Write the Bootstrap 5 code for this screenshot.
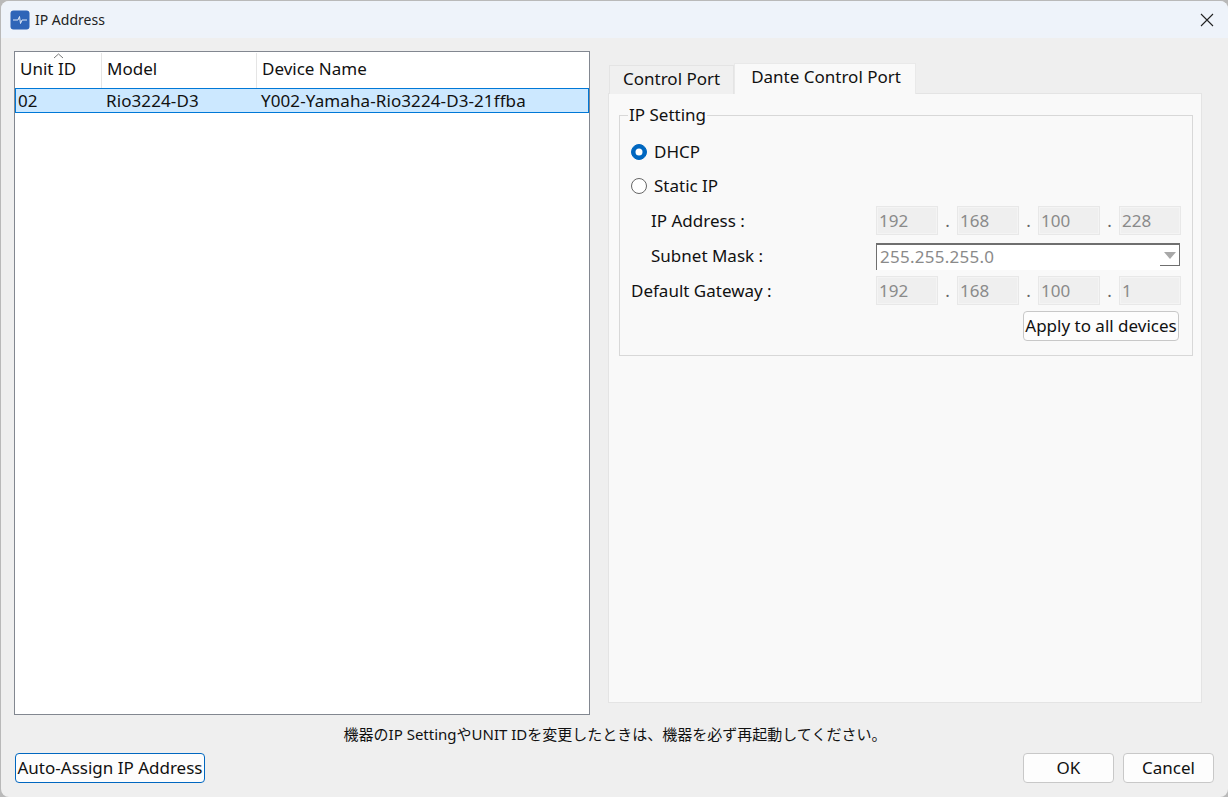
<!DOCTYPE html>
<html lang="ja">
  <head>
    <meta charset="UTF-8" />
    <meta name="viewport" content="width=device-width, initial-scale=1.0" />
    <title>IP Address</title>
    <link href="https://cdn.jsdelivr.net/npm/bootstrap@5.3.0/dist/css/bootstrap.min.css" rel="stylesheet" />
    <style>
      html, body { height: 100%; }
      body {
        background: #b9b9b9;
        font-family: "Noto Sans", "Noto Sans CJK JP", sans-serif;
        font-size: 17px;
        line-height: 22px;
        color: #111;
        overflow: hidden;
      }
      .dlg-window {
        width: 1227px;
        height: 796px;
        margin: 1px 0 0 1px;
        background: #efefef;
        border-radius: 8px;
        overflow: hidden;
      }
      .dlg-title {
        height: 37px;
        background: #eef3fa;
        padding: 0 10px 0 9px;
        font-size: 14px;
        color: #222;
      }
      .title-icon { margin-right: 5px; }
      .dlg-body { padding: 13px 13px 0; height: 677px; }
      .dev-list {
        width: 576px;
        height: 664px;
        background: #fff;
        border: 1px solid #828790;
      }
      .dev-head { height: 35px; margin-top: 1px; position: relative; }
      .dev-head > div { border-right: 1px solid #e5e5e5; padding-left: 5px; line-height: 32px; }
      .sort-mark { position: absolute; left: 38px; top: 0; }
      .col-unit { width: 87px; }
      .col-model { width: 155px; }
      .dev-row {
        height: 25px;
        margin-left: 0;
        background: #cce8ff;
        border: 1px solid #0078d7;
        line-height: 23px;
        letter-spacing: 0.1px;
      }
      .dev-row .col-unit { width: 88px; padding-left: 2px; }
      .dev-row .col-model { width: 155px; padding-left: 2px; }
      .dev-row .col-name { padding-left: 2px; }
      .right-pane { width: 594px; margin-left: 18px; }
      .port-tabs { border-bottom: 0; height: 30px; padding-left: 1px; margin-top: 12px; align-items: flex-end; }
      .port-tabs .nav-link {
        color: #111;
        border-radius: 0;
        margin: 0;
        background: #f0f0f0;
        border: 1px solid #e4e4e4;
        border-bottom: 0;
        height: 29px;
        padding: 2px 13px 0;
        line-height: 22px;
      }
      .port-tabs .nav-link.active {
        background: #f9f9f9;
        height: 31px;
        padding: 2px 14px 0 16px;
        border-color: #e9e9e9;
        color: #111;
      }
      .port-panel {
        height: 610px;
        background: #f9f9f9;
        border: 1px solid #e4e4e4;
        padding: 21px 8px 0 10px;
      }
      .ip-group {
        height: 252px;
        border: 1px solid #d8d8d8;
        padding: 9px 11px 0 11px;
        margin-top: -11px;
      }
      .ip-group legend {
        float: none;
        width: auto;
        margin: 0 0 0 -3px;
        padding: 0 1px;
        font-size: 17px;
        line-height: 22px;
      }
      .radio-line { height: 34px; padding: 0; margin: 0; min-height: 0; }
      .radio-line .form-check-input {
        float: none;
        margin: 0 7px 0 0;
        width: 16px;
        height: 16px;
        border: 1px solid #666;
        background-color: #fff;
      }
      .radio-line .form-check-input:checked {
        border-color: #0067c0;
        background-color: #0067c0;
        opacity: 1;
      }
      .ip-line { height: 35px; }
      .ip-label { width: 245px; }
      .ip-label.indent { padding-left: 20px; }
      .octet.form-control {
        width: 62px;
        height: 29px;
        padding: 0 0 0 1px;
        border: 2px solid #f4f4f4;
        outline: 1px solid #e8e8e8;
        outline-offset: -1px;
        border-radius: 0;
        background: #efefef;
        font-size: 17px;
        color: #8a8a8a;
        line-height: 25px;
      }
      .octet-dot { width: 19px; text-align: center; color: #666; }
      .mask-box {
        width: 304px;
        height: 27px;
        background: #fff;
        border-top: 2px solid #6f6f6f;
        border-left: 1px solid #6f6f6f;
        color: #8a8a8a;
        padding-left: 3px;
        line-height: 24px;
        margin-top: 2px;
        position: relative;
        letter-spacing: 0.25px;
      }
      .mask-arrow {
        position: absolute;
        right: 0;
        top: 0;
        width: 20px;
        height: 21px;
        border-right: 1px solid #6f6f6f;
        border-bottom: 1px solid #6f6f6f;
      }
      .pc-btn.btn {
        background: #fdfdfd;
        border: 1px solid #c8c8c8;
        border-radius: 4px;
        font-size: 17px;
        line-height: 22px;
        padding: 0;
        height: 30px;
        color: #111;
      }
      .pc-btn.btn-apply { width: 156px; }
      .pc-btn.btn-auto { width: 190px; border-color: #0067c0; }
      .pc-btn.btn-foot { width: 91px; }
      .btn-gap { margin-left: 9px; }
      .apply-line { padding-right: 1px; margin-top: 3px; width: 549px; }
      .dlg-note { height: 38px; text-align: center; font-size: 15px; line-height: 38px; padding-left: 1px; }
      .dlg-foot { padding: 0 14px 0 14px; }
    </style>
  </head>
  <body>
    <div class="dlg-window">
      <!-- title bar -->
      <div class="dlg-title d-flex align-items-center">
        <svg width="20" height="20" viewBox="0 0 20 20" class="title-icon">
          <rect x="0.5" y="0.5" width="19" height="19" rx="3" fill="#2f65b8" />
          <path d="M3 10h5l1.5-3.500 1 7 1.500-3.500h5" fill="none" stroke="#dfe8f6" stroke-width="1" />
        </svg>
        <span>IP Address</span>
        <svg width="14" height="14" viewBox="0 0 14 14" class="ms-auto me-1">
          <path d="M1 1l12 12M13 1L1 13" stroke="#222" stroke-width="1.1" fill="none" />
        </svg>
      </div>

      <div class="dlg-body d-flex">
        <!-- device list -->
        <div class="dev-list">
          <div class="dev-head d-flex">
            <svg class="sort-mark" width="11" height="6" viewBox="0 0 11 6">
              <path d="M1 5l4.500-4 4.500 4" fill="none" stroke="#777" />
            </svg>
            <div class="col-unit">Unit ID</div>
            <div class="col-model">Model</div>
            <div class="col-name flex-grow-1 border-0">Device Name</div>
          </div>
          <div class="dev-row d-flex">
            <div class="col-unit">02</div>
            <div class="col-model">Rio3224-D3</div>
            <div class="col-name">Y002-Yamaha-Rio3224-D3-21ffba</div>
          </div>
        </div>

        <!-- settings -->
        <div class="right-pane">
          <ul class="nav nav-tabs port-tabs">
            <li class="nav-item"><a class="nav-link" href="#">Control Port</a></li>
            <li class="nav-item"><a class="nav-link active" href="#">Dante Control Port</a></li>
          </ul>
          <div class="port-panel">
            <fieldset class="ip-group">
              <legend>IP Setting</legend>
              <div class="form-check radio-line d-flex align-items-center">
                <input class="form-check-input" type="radio" name="ipmode" id="dhcp" checked />
                <label for="dhcp">DHCP</label>
              </div>
              <div class="form-check radio-line d-flex align-items-center">
                <input class="form-check-input" type="radio" name="ipmode" id="static" />
                <label for="static">Static IP</label>
              </div>
              <div class="ip-line d-flex align-items-center">
                <div class="ip-label indent">IP Address :</div>
                <input class="form-control octet" value="192" disabled />
                <span class="octet-dot">.</span>
                <input class="form-control octet" value="168" disabled />
                <span class="octet-dot">.</span>
                <input class="form-control octet" value="100" disabled />
                <span class="octet-dot">.</span>
                <input class="form-control octet" value="228" disabled />
              </div>
              <div class="ip-line d-flex align-items-center">
                <div class="ip-label indent">Subnet Mask :</div>
                <div class="mask-box">255.255.255.0
                  <span class="mask-arrow d-flex align-items-center justify-content-center">
                    <svg width="12" height="7" viewBox="0 0 12 7"><path d="M0 0h12l-6 7z" fill="#a8a8a8" /></svg>
                  </span>
                </div>
              </div>
              <div class="ip-line d-flex align-items-center">
                <div class="ip-label">Default Gateway :</div>
                <input class="form-control octet" value="192" disabled />
                <span class="octet-dot">.</span>
                <input class="form-control octet" value="168" disabled />
                <span class="octet-dot">.</span>
                <input class="form-control octet" value="100" disabled />
                <span class="octet-dot">.</span>
                <input class="form-control octet" value="1" disabled />
              </div>
              <div class="apply-line d-flex justify-content-end">
                <button type="button" class="btn pc-btn btn-apply">Apply to all devices</button>
              </div>
            </fieldset>
          </div>
        </div>
      </div>

      <div class="dlg-note">機器のIP SettingやUNIT IDを変更したときは、機器を必ず再起動してください。</div>
      <div class="dlg-foot d-flex">
        <button type="button" class="btn pc-btn btn-auto">Auto-Assign IP Address</button>
        <button type="button" class="btn pc-btn btn-foot ms-auto">OK</button>
        <button type="button" class="btn pc-btn btn-foot btn-gap">Cancel</button>
      </div>
    </div>
    <script src="https://cdn.jsdelivr.net/npm/bootstrap@5.3.0/dist/js/bootstrap.bundle.min.js"></script>
  </body>
</html>
